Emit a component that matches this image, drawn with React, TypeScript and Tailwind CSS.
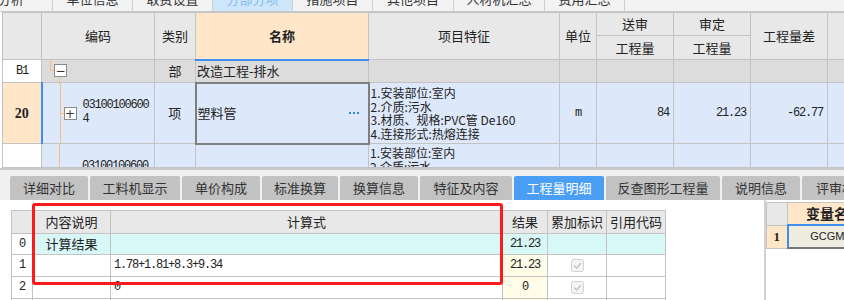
import React from "react";

const CJK = "font-['Noto_Sans_CJK_SC',sans-serif]";
const MONO = "font-['Liberation_Mono','Noto_Sans_CJK_SC',monospace] tracking-[-1.2px]";
const B = "border border-[#c3c3c3]";

const topTabs = [
  { t: "单位信息", w: "w-[80px]" },
  { t: "取费设置", w: "w-[80px]" },
  { t: "分部分项", w: "w-[80px]", active: true },
  { t: "措施项目", w: "w-[80px]" },
  { t: "其他项目", w: "w-[81px]" },
  { t: "人材机汇总", w: "w-[91px]" },
  { t: "费用汇总", w: "w-[80px]" },
];

const bottomTabs = [
  { t: "详细对比", w: "w-[78px]" },
  { t: "工料机显示", w: "w-[90px]" },
  { t: "单价构成", w: "w-[78px]" },
  { t: "标准换算", w: "w-[76px]" },
  { t: "换算信息", w: "w-[78px]" },
  { t: "特征及内容", w: "w-[92px]" },
  { t: "工程量明细", w: "w-[90px]", active: true },
  { t: "反查图形工程量", w: "w-[114px]" },
  { t: "说明信息", w: "w-[78px]" },
  { t: "评审材料", w: "w-[80px]" },
];

const Check = () => (
  <svg width="13" height="13" viewBox="0 0 13 13" className="mx-auto block">
    <rect x="0.5" y="0.5" width="12" height="12" rx="2" fill="#f4f4f4" stroke="#d0d0d0" />
    <path d="M3.2 6.6 L5.6 9 L9.8 4.2" fill="none" stroke="#c2c2c2" strokeWidth="1.4" />
  </svg>
);

const TreeBox = ({ sign }: { sign: string }) => (
  <div className="absolute w-[13px] h-[13px] border border-[#8a8a8a] bg-white flex items-center justify-center text-[12px] leading-none text-[#333] font-['DejaVu_Sans',sans-serif]">
    {sign}
  </div>
);

export default function App() {
  return (
    <div className={`relative w-[844px] h-[300px] overflow-hidden bg-white text-[#222] ${CJK}`}>
      {/* top tab bar */}
      <div className="h-[12px] flex bg-[#f3f3f3] border-b border-[#c8c8c8] overflow-hidden">
        <div className="w-[53px] shrink-0 border-r border-[#cfcfcf] flex justify-end pr-[28px] overflow-hidden">
          <span className="text-[13px] leading-[13px] -mt-[8px] whitespace-nowrap text-[#333]">造价分析</span>
        </div>
        {topTabs.map((t) => (
          <div
            key={t.t}
            className={`${t.w} shrink-0 border-r border-[#cfcfcf] flex justify-center overflow-hidden ${t.active ? "bg-[#cde6fa]" : ""}`}
          >
            <span className={`text-[13px] leading-[13px] -mt-[8px] whitespace-nowrap ${t.active ? "text-[#86bdf0]" : "text-[#333]"}`}>{t.t}</span>
          </div>
        ))}
      </div>

      {/* top grid */}
      <div className="h-[156px] overflow-hidden pl-[2px] bg-white">
        <table className="border-collapse table-fixed w-[900px] text-[13px]">
          <colgroup>
            <col className="w-[39px]" />
            <col className="w-[113px]" />
            <col className="w-[41px]" />
            <col className="w-[173px]" />
            <col className="w-[191px]" />
            <col className="w-[37px]" />
            <col className="w-[77px]" />
            <col className="w-[77px]" />
            <col className="w-[77px]" />
            <col className="w-[75px]" />
          </colgroup>
          <tbody>
            <tr className="h-[23px] bg-[#e8e8e8]">
              <td rowSpan={2} className={B}></td>
              <td rowSpan={2} className={`${B} text-center font-normal`}>编码</td>
              <td rowSpan={2} className={`${B} text-center`}>类别</td>
              <td rowSpan={2} className={`${B} text-center font-bold bg-[#ffe6c9] border-b-2 border-b-[#3d8ef0]`}>名称</td>
              <td rowSpan={2} className={`${B} text-center`}>项目特征</td>
              <td rowSpan={2} className={`${B} text-center`}>单位</td>
              <td className={`${B} text-center`}>送审</td>
              <td className={`${B} text-center`}>审定</td>
              <td rowSpan={2} className={`${B} text-center`}>工程量差</td>
              <td rowSpan={2} className={B}></td>
            </tr>
            <tr className="h-[24px] bg-[#e8e8e8]">
              <td className={`${B} text-center`}>工程量</td>
              <td className={`${B} text-center`}>工程量</td>
            </tr>

            {/* B1 row */}
            <tr className="h-[23px] bg-[#dcdcdc]">
              <td className={`${B} bg-white text-center text-[12px] ${MONO}`}>B1</td>
              <td className={`${B} relative p-0`}>
                <div className="absolute left-[8px] top-0 w-px h-[10px] bg-[#f7c07c]" />
                <div className="absolute left-[8px] top-[10px] w-[5px] h-px bg-[#f7c07c]" />
                <div className="absolute left-[17px] top-[17px] w-px h-[7px] bg-[#f7c07c]" />
                <div className="absolute left-[12px] top-[4px]">
                  <TreeBox sign="−" />
                </div>
              </td>
              <td className={`${B} text-center`}>部</td>
              <td className={`${B} pl-[1px] border-t-2 border-t-[#3d8ef0]`}>改造工程-排水</td>
              <td className={B}></td>
              <td className={B}></td>
              <td className={B}></td>
              <td className={B}></td>
              <td className={B}></td>
              <td className={B}></td>
            </tr>

            {/* row 20 */}
            <tr className="h-[61px] bg-[#dde9fb]">
              <td className={`${B} bg-[#ffe6c9] text-center font-['Liberation_Serif',serif] font-bold text-[14px] border-r-2 border-r-[#3d8ef0]`}>20</td>
              <td className={`${B} relative p-0 align-top`}>
                <div className="absolute left-[17px] top-0 bottom-0 w-px bg-[#f7c07c]" />
                <div className="absolute left-[17px] top-[30px] w-[5px] h-px bg-[#f7c07c]" />
                <div className="absolute left-[21px] top-[24px]">
                  <TreeBox sign="+" />
                </div>
                <div className={`pl-[40px] pt-[15px] text-[12px] leading-[14px] ${MONO}`}>
                  <div>03100100600</div>
                  <div>4</div>
                </div>
              </td>
              <td className={`${B} text-center`}>项</td>
              <td className="border-2 border-[#7f7f7f] p-0">
                <div className="flex items-center justify-between pl-[1px] pr-[9px]">
                  <span>塑料管</span>
                  <span className="flex gap-[2px]">
                    <span className="w-[2px] h-[2px] bg-[#3a86d6]" />
                    <span className="w-[2px] h-[2px] bg-[#3a86d6]" />
                    <span className="w-[2px] h-[2px] bg-[#3a86d6]" />
                  </span>
                </div>
              </td>
              <td className={`${B} pl-[1px] text-[12px] leading-[13.5px] whitespace-nowrap`}>
                <div>1.安装部位:室内</div>
                <div>2.介质:污水</div>
                <div>3.材质、规格:PVC管 De160</div>
                <div>4.连接形式:热熔连接</div>
              </td>
              <td className={`${B} text-center text-[12px] ${MONO}`}>m</td>
              <td className={`${B} text-right pr-[4px] text-[12px] ${MONO}`}>84</td>
              <td className={`${B} text-right pr-[4px] text-[12px] ${MONO}`}>21.23</td>
              <td className={`${B} text-right pr-[4px] text-[12px] ${MONO}`}>-62.77</td>
              <td className={B}></td>
            </tr>

            {/* next row (clipped at the bottom of the pane) */}
            <tr className="h-[24px] bg-[#dde9fb]">
              <td className={`${B} bg-white`}></td>
              <td className={`${B} relative p-0 align-top`}>
                <div className="absolute left-[17px] top-0 bottom-0 w-px bg-[#f7c07c]" />
                <div className={`h-[23px] overflow-hidden pl-[40px] pt-[15px] text-[12px] leading-[14px] ${MONO}`}>
                  03100100600
                </div>
              </td>
              <td className={B}></td>
              <td className={B}></td>
              <td className={`${B} p-0 align-top`}>
                <div className="h-[23px] overflow-hidden pl-[1px] pt-[2px] text-[12px] leading-[13.5px] whitespace-nowrap">
                  <div>1.安装部位:室内</div>
                  <div>2.介质:污水</div>
                </div>
              </td>
              <td className={B}></td>
              <td className={B}></td>
              <td className={B}></td>
              <td className={B}></td>
              <td className={B}></td>
            </tr>
          </tbody>
        </table>
      </div>

      {/* separator */}
      <div className="h-[2px] bg-[#c8c8c8]" />

      {/* bottom tabs */}
      <div className="h-[30px] bg-[#f0f0f0] flex items-end pl-[10px] gap-[2px] overflow-hidden">
        {bottomTabs.map((t) => (
          <div
            key={t.t}
            className={`${t.w} h-[24px] shrink-0 rounded-t-[2px] flex items-center justify-center text-[13px] leading-[16px] whitespace-nowrap ${
              t.active ? "bg-[#4a9ff5] text-white" : "bg-[#c2c2c2] text-[#333]"
            }`}
          >
            {t.t}
          </div>
        ))}
      </div>

      {/* bottom content */}
      <div className="flex h-[100px] bg-white">
        <div className="w-[764px] shrink-0 pt-[10px] pl-[11px]">
          <table className="border-collapse table-fixed w-[654px] text-[13px]">
            <colgroup>
              <col className="w-[21px]" />
              <col className="w-[78px]" />
              <col className="w-[392px]" />
              <col className="w-[45px]" />
              <col className="w-[59px]" />
              <col className="w-[59px]" />
            </colgroup>
            <tbody>
              <tr className="h-[23px] bg-[#e8e8e8]">
                <td className={B}></td>
                <td className={`${B} text-center`}>内容说明</td>
                <td className={`${B} text-center`}>计算式</td>
                <td className={`${B} text-center`}>结果</td>
                <td className={`${B} text-center`}>累加标识</td>
                <td className={`${B} text-center`}>引用代码</td>
              </tr>
              <tr className="h-[20px]">
                <td className={`${B} text-center text-[12px] ${MONO}`}>0</td>
                <td className={`${B} text-center bg-[#d8f7f7]`}>计算结果</td>
                <td className={`${B} bg-[#d8f7f7]`}></td>
                <td className={`${B} text-center bg-[#d8f7f7] text-[12px] ${MONO}`}>21.23</td>
                <td className={`${B} bg-[#d8f7f7]`}></td>
                <td className={`${B} bg-[#d8f7f7]`}></td>
              </tr>
              <tr className="h-[22px]">
                <td className={`${B} text-center text-[12px] ${MONO}`}>1</td>
                <td className={B}></td>
                <td className={`${B} pl-[3px] text-[12px] ${MONO}`}>1.78+1.81+8.3+9.34</td>
                <td className={`${B} text-center bg-[#fffde8] text-[12px] ${MONO}`}>21.23</td>
                <td className={B}><Check /></td>
                <td className={B}></td>
              </tr>
              <tr className="h-[22px]">
                <td className={`${B} text-center text-[12px] ${MONO}`}>2</td>
                <td className={B}></td>
                <td className={`${B} pl-[3px] text-[12px] ${MONO}`}>0</td>
                <td className={`${B} text-center bg-[#fffde8] text-[12px] ${MONO}`}>0</td>
                <td className={B}><Check /></td>
                <td className={B}></td>
              </tr>
              <tr className="h-[22px]">
                <td className={B}></td>
                <td className={B}></td>
                <td className={B}></td>
                <td className={`${B} bg-[#fffde8]`}></td>
                <td className={B}></td>
                <td className={B}></td>
              </tr>
            </tbody>
          </table>
        </div>
        <div className="w-[2px] shrink-0 bg-[#d2d2d2]" />
        <div className="flex-1 pt-[2px] overflow-hidden">
          <table className="border-collapse table-fixed w-[100px]">
            <colgroup>
              <col className="w-[21px]" />
              <col className="w-[79px]" />
            </colgroup>
            <tbody>
              <tr className="h-[22px]">
                <td className={`${B} bg-[#e8e8e8]`}></td>
                <td className={`${B} bg-[#ffe6c9] text-center font-bold text-[14px] whitespace-nowrap border-b-2 border-b-[#3d8ef0]`}>变量名</td>
              </tr>
              <tr className="h-[23px]">
                <td className={`${B} bg-[#ffe6c9] text-center font-['Liberation_Serif',serif] font-bold text-[13px]`}>1</td>
                <td className={`${B} bg-[#efede1] text-center text-[11px] font-['Liberation_Sans',sans-serif] border-l-2 border-l-[#3d8ef0] border-b-2 border-b-[#777]`}>GCGM</td>
              </tr>
            </tbody>
          </table>
        </div>
      </div>

      {/* red highlight */}
      <div className="absolute left-[32px] top-[203px] w-[471px] h-[82px] border-[3px] border-[#fb1b1b] rounded-[3px] pointer-events-none" />
    </div>
  );
}
